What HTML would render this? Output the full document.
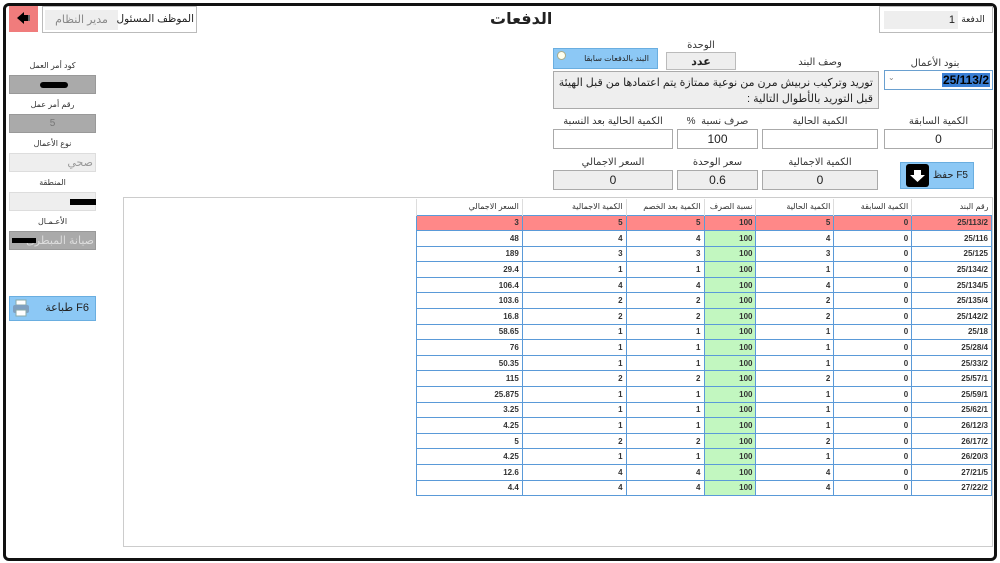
<!DOCTYPE html>
<html><head><meta charset="utf-8">
<style>
*{box-sizing:border-box;margin:0;padding:0}
body{width:1000px;height:563px;background:#fff;position:relative;overflow:hidden;font-family:"Liberation Sans","DejaVu Sans",sans-serif;color:#222;direction:rtl}
.a{position:absolute;white-space:nowrap}
.frame{left:3px;top:3px;width:994px;height:558px;border:3px solid #111;border-radius:6px}
.box{position:absolute;border:1px solid #aaa;background:#fff;font-size:12px;display:flex;align-items:center;justify-content:center}
.gr{background:#eee;border:1px solid #bbb}
.lbl{position:absolute;font-size:10px;color:#333;text-align:center;white-space:nowrap}
.dg{background:#aaa;border:1px solid #999}
table{border-collapse:collapse;font-size:8px;direction:rtl}
td,th{border:1px solid #5a9ad8;height:15.6px;padding:0 3px;text-align:right;white-space:nowrap}
td{font-weight:bold;color:#333}
th{font-weight:normal;border:none;border-left:1px solid #ddd;color:#333;height:16px}
tr.r td{background:#f88}
td.g{background:#c2f7c0}
tr.r td.g{background:#f88}
</style></head><body>
<div class="a frame"></div>

<div class="a" style="left:9px;top:6px;width:29px;height:26px;background:#f07c7c"></div>
<svg class="a" style="left:16px;top:11px" width="15" height="14" viewBox="0 0 15 14"><path d="M1 7 L8 1 L8 4 L12 4 L12 10 L8 10 L8 13 Z" fill="#000"/><rect x="12" y="4" width="2" height="6" fill="#666"/></svg>
<div class="box" style="left:42px;top:6px;width:155px;height:27px;border-color:#bbb"></div>
<div class="a gr" style="left:45px;top:10px;width:73px;height:20px;border:none;font-size:11px;color:#888;text-align:center;line-height:20px">مدير النظام</div>
<div class="a" style="left:122px;top:13px;width:72px;font-size:10.5px;text-align:center">الموظف المسئول</div>

<div class="a" style="left:490px;top:9px;font-size:16px;font-weight:bold">الدفعات</div>

<div class="box" style="left:879px;top:6px;width:114px;height:27px;border-color:#bbb"></div>
<div class="a" style="left:884px;top:11px;width:74px;height:18px;background:#eee;font-size:11px;text-align:right;padding-right:3px;line-height:18px">1</div>
<div class="a" style="left:958px;top:14px;width:30px;font-size:9px;text-align:center">الدفعة</div>

<div class="lbl" style="left:9px;top:61px;width:87px;font-size:8px">كود أمر العمل</div>
<div class="a dg" style="left:9px;top:75px;width:87px;height:19px"><div class="a" style="left:30px;top:6px;width:28px;height:6px;background:#000;border-radius:3px"></div></div>
<div class="lbl" style="left:9px;top:100px;width:87px;font-size:8px">رقم أمر عمل</div>
<div class="a dg" style="left:9px;top:114px;width:87px;height:19px;text-align:center;font-size:10px;color:#777;line-height:18px">5</div>
<div class="lbl" style="left:9px;top:139px;width:87px;font-size:8px">نوع الأعمال</div>
<div class="a gr" style="left:9px;top:153px;width:87px;height:19px;border-color:#ddd;font-size:11px;color:#999;text-align:right;padding-right:2px;line-height:18px">صحي</div>
<div class="lbl" style="left:9px;top:178px;width:87px;font-size:8px">المنطقة</div>
<div class="a gr" style="left:9px;top:192px;width:87px;height:19px;border-color:#ddd"><div class="a" style="left:60px;top:6px;width:26px;height:6px;background:#000"></div></div>
<div class="lbl" style="left:9px;top:217px;width:87px;font-size:8px">الأعـمـال</div>
<div class="a dg" style="left:9px;top:231px;width:87px;height:19px;font-size:11px;color:#ddd;text-align:right;padding-right:1px;line-height:18px;overflow:hidden">صيانة المبطرى<div class="a" style="left:2px;top:6px;width:24px;height:5px;background:#000"></div></div>
<div class="a" style="left:9px;top:296px;width:87px;height:25px;background:#8cc8f5;border:1px solid #6aaee0;font-size:11px;text-align:right;padding-right:6px;line-height:23px">F6 طباعة</div>
<svg class="a" style="left:12px;top:299px" width="18" height="18" viewBox="0 0 18 18"><rect x="4" y="1" width="10" height="5" fill="#fff" stroke="#8aa"/><rect x="1" y="6" width="16" height="8" rx="2" fill="#7fa0c0"/><rect x="4" y="11" width="10" height="6" fill="#fff" stroke="#8aa"/></svg>

<div class="lbl" style="left:681px;top:40px;width:40px">الوحدة</div>
<div class="box gr" style="left:666px;top:52px;width:70px;height:18px;font-size:11px;font-weight:bold">عدد</div>
<div class="a" style="left:553px;top:48px;width:105px;height:21px;background:#8cc8f5;border:1px solid #6aaee0;font-size:8px;text-align:right;padding-right:8px;line-height:20px">البند بالدفعات سابقا</div>
<div class="a" style="left:557px;top:51px;width:9px;height:9px;border-radius:50%;background:#ffe;border:1px solid #aa8"></div>
<div class="lbl" style="left:785px;top:57px;width:70px">وصف البند</div>
<div class="lbl" style="left:905px;top:58px;width:60px">بنود الأعمال</div>
<div class="a" style="left:884px;top:70px;width:109px;height:20px;border:1px solid #6aa0d0;background:#fff"><span class="a" style="right:2px;top:2px;background:#3a7fd5;color:#000;font-size:12px;font-weight:bold;padding:0 1px">25/113/2</span><span class="a" style="left:3px;top:2px;font-size:8px;color:#888">⌄</span></div>
<div class="a gr" style="left:553px;top:71px;width:326px;height:38px;border-color:#aaa;font-size:11px;text-align:right;padding:3px 5px 3px 2px;line-height:16px;letter-spacing:-0.8px;white-space:normal">توريد وتركيب نربيش مرن من نوعية ممتازة يتم اعتمادها من قبل الهيئة قبل التوريد بالأطوال التالية :</div>

<div class="lbl" style="left:553px;top:116px;width:120px">الكمية الحالية بعد النسبة</div>
<div class="lbl" style="left:677px;top:116px;width:81px">صرف نسبة&nbsp;&nbsp;%</div>
<div class="lbl" style="left:762px;top:116px;width:116px">الكمية الحالية</div>
<div class="lbl" style="left:884px;top:116px;width:109px">الكمية السابقة</div>
<div class="box" style="left:553px;top:129px;width:120px;height:20px"></div>
<div class="box" style="left:677px;top:129px;width:81px;height:20px">100</div>
<div class="box" style="left:762px;top:129px;width:116px;height:20px"></div>
<div class="box" style="left:884px;top:129px;width:109px;height:20px">0</div>

<div class="lbl" style="left:553px;top:157px;width:120px">السعر الاجمالي</div>
<div class="lbl" style="left:677px;top:157px;width:81px">سعر الوحدة</div>
<div class="lbl" style="left:762px;top:157px;width:116px">الكمية الاجمالية</div>
<div class="box gr" style="left:553px;top:170px;width:120px;height:20px;border-color:#aaa">0</div>
<div class="box gr" style="left:677px;top:170px;width:81px;height:20px;border-color:#aaa">0.6</div>
<div class="box gr" style="left:762px;top:170px;width:116px;height:20px;border-color:#aaa">0</div>
<div class="a" style="left:900px;top:162px;width:74px;height:27px;background:#8cc8f5;border:1px solid #6aaee0;font-size:10px;text-align:right;padding-right:5px;line-height:25px">F5 حفظ</div>
<svg class="a" style="left:906px;top:164px" width="23" height="23" viewBox="0 0 23 23"><rect x="0" y="0" width="23" height="23" rx="3" fill="#000"/><path d="M8 6 H15 V11 H19 L11.5 18 L4 11 H8 Z" fill="#fff"/></svg>

<div class="a" style="left:123px;top:197px;width:870px;height:350px;border:1px solid #ccc"></div>
<table class="a" style="right:8px;top:199px;width:576px">
<colgroup><col style="width:80px"><col style="width:78px"><col style="width:78px"><col style="width:52px"><col style="width:78px"><col style="width:104px"><col style="width:106px"></colgroup>
<tr><th>رقم البند</th><th>الكمية السابقة</th><th>الكمية الحالية</th><th>نسبة الصرف</th><th>الكمية بعد الخصم</th><th>الكمية الاجمالية</th><th>السعر الاجمالي</th></tr>
<tr class="r"><td>25/113/2</td><td>0</td><td>5</td><td class="g">100</td><td>5</td><td>5</td><td>3</td></tr>
<tr><td>25/116</td><td>0</td><td>4</td><td class="g">100</td><td>4</td><td>4</td><td>48</td></tr>
<tr><td>25/125</td><td>0</td><td>3</td><td class="g">100</td><td>3</td><td>3</td><td>189</td></tr>
<tr><td>25/134/2</td><td>0</td><td>1</td><td class="g">100</td><td>1</td><td>1</td><td>29.4</td></tr>
<tr><td>25/134/5</td><td>0</td><td>4</td><td class="g">100</td><td>4</td><td>4</td><td>106.4</td></tr>
<tr><td>25/135/4</td><td>0</td><td>2</td><td class="g">100</td><td>2</td><td>2</td><td>103.6</td></tr>
<tr><td>25/142/2</td><td>0</td><td>2</td><td class="g">100</td><td>2</td><td>2</td><td>16.8</td></tr>
<tr><td>25/18</td><td>0</td><td>1</td><td class="g">100</td><td>1</td><td>1</td><td>58.65</td></tr>
<tr><td>25/28/4</td><td>0</td><td>1</td><td class="g">100</td><td>1</td><td>1</td><td>76</td></tr>
<tr><td>25/33/2</td><td>0</td><td>1</td><td class="g">100</td><td>1</td><td>1</td><td>50.35</td></tr>
<tr><td>25/57/1</td><td>0</td><td>2</td><td class="g">100</td><td>2</td><td>2</td><td>115</td></tr>
<tr><td>25/59/1</td><td>0</td><td>1</td><td class="g">100</td><td>1</td><td>1</td><td>25.875</td></tr>
<tr><td>25/62/1</td><td>0</td><td>1</td><td class="g">100</td><td>1</td><td>1</td><td>3.25</td></tr>
<tr><td>26/12/3</td><td>0</td><td>1</td><td class="g">100</td><td>1</td><td>1</td><td>4.25</td></tr>
<tr><td>26/17/2</td><td>0</td><td>2</td><td class="g">100</td><td>2</td><td>2</td><td>5</td></tr>
<tr><td>26/20/3</td><td>0</td><td>1</td><td class="g">100</td><td>1</td><td>1</td><td>4.25</td></tr>
<tr><td>27/21/5</td><td>0</td><td>4</td><td class="g">100</td><td>4</td><td>4</td><td>12.6</td></tr>
<tr><td>27/22/2</td><td>0</td><td>4</td><td class="g">100</td><td>4</td><td>4</td><td>4.4</td></tr>
</table>
</body></html>
